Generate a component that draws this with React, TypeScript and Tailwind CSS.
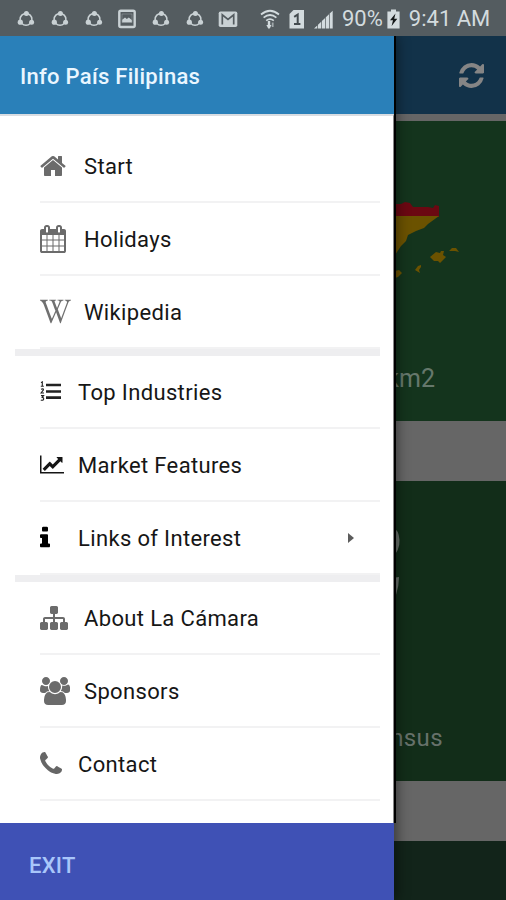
import type { ReactNode } from "react";
import { FaWikipediaW } from "react-icons/fa";

type GlyphProps = {
  box: string;
  d: string;
  className: string;
};

function Glyph({ box, d, className }: GlyphProps) {
  return (
    <svg viewBox={box} preserveAspectRatio="none" fill="currentColor" className={className}>
      <path d={d} />
    </svg>
  );
}

const paths = {
  home: "M1472 992v480q0 26-19 45t-45 19h-384v-384h-256v384h-384q-26 0-45-19t-19-45v-480q0-1 .5-3t.5-3l575-474 575 474q1 2 1 6zm223-69l-62 74q-8 9-21 11h-3q-13 0-21-7l-692-577-692 577q-12 8-24 7-13-2-21-11l-62-74q-8-10-7-23.5t11-21.5l719-599q32-26 76-26t76 26l244 204v-195q0-14 9-23t23-9h192q14 0 23 9t9 23v408l219 182q10 8 11 21.5t-7 23.5z",
  calendar:
    "M192 1664h288v-288h-288v288zm352 0h320v-288h-320v288zm-352-352h288v-320h-288v320zm352 0h320v-320h-320v320zm-352-384h288v-288h-288v288zm736 736h320v-288h-320v288zm-384-736h320v-288h-320v288zm768 736h288v-288h-288v288zm-384-352h320v-320h-320v320zm-352-864v-288q0-13-9.5-22.5t-22.5-9.5h-64q-13 0-22.5 9.5t-9.5 22.5v288q0 13 9.5 22.5t22.5 9.5h64q13 0 22.5-9.5t9.5-22.5zm736 864h288v-320h-288v320zm-384-384h320v-288h-320v288zm384 0h288v-288h-288v288zm32-480v-288q0-13-9.5-22.5t-22.5-9.5h-64q-13 0-22.5 9.5t-9.5 22.5v288q0 13 9.5 22.5t22.5 9.5h64q13 0 22.5-9.5t9.5-22.5zm384-64v1280q0 52-38 90t-90 38h-1408q-52 0-90-38t-38-90v-1280q0-52 38-90t90-38h128v-96q0-66 47-113t113-47h64q66 0 113 47t47 113v96h384v-96q0-66 47-113t113-47h64q66 0 113 47t47 113v96h128q52 0 90 38t38 90z",
  refresh:
    "M1639 1056q0 5-1 7-64 268-268 434.5t-478 166.5q-146 0-282.5-55t-243.5-157l-129 129q-19 19-45 19t-45-19-19-45v-448q0-26 19-45t45-19h448q26 0 45 19t19 45-19 45l-137 137q71 66 161 102t187 36q134 0 250-65t186-179q11-17 53-117 8-23 30-23h192q13 0 22.5 9.5t9.5 22.5zm25-800v448q0 26-19 45t-45 19h-448q-26 0-45-19t-19-45 19-45l138-138q-148-137-349-137-134 0-250 65t-186 179q-11 17-53 117-8 23-30 23h-199q-13 0-22.5-9.5t-9.5-22.5v-7q65-268 270-434.5t480-166.5q146 0 284 55.5t245 156.5l130-129q19-19 45-19t45 19 19 45z",
  chart:
    "M2048 1536v128h-2048v-1536h128v1408h1920zm-128-1248v435q0 21-19.5 29.5t-35.5-7.5l-121-121-633 633q-10 10-23 10t-23-10l-233-233-416 416-192-192 585-585q10-10 23-10t23 10l233 233 464-464-121-121q-16-16-7.5-35.5t29.5-19.5h435q14 0 23 9t9 23z",
  info: "M1216 1344v128q0 26-19 45t-45 19h-512q-26 0-45-19t-19-45v-128q0-26 19-45t45-19h64v-384h-64q-26 0-45-19t-19-45v-128q0-26 19-45t45-19h384q26 0 45 19t19 45v576h64q26 0 45 19t19 45zm-128-1152v192q0 26-19 45t-45 19h-256q-26 0-45-19t-19-45v-192q0-26 19-45t45-19h256q26 0 45 19t19 45z",
  sitemap:
    "M1792 1248v320q0 40-28 68t-68 28h-320q-40 0-68-28t-28-68v-320q0-40 28-68t68-28h96v-192h-512v192h96q40 0 68 28t28 68v320q0 40-28 68t-68 28h-320q-40 0-68-28t-28-68v-320q0-40 28-68t68-28h96v-192h-512v192h96q40 0 68 28t28 68v320q0 40-28 68t-68 28h-320q-40 0-68-28t-28-68v-320q0-40 28-68t68-28h96v-192q0-52 38-90t90-38h512v-192h-96q-40 0-68-28t-28-68v-320q0-40 28-68t68-28h320q40 0 68 28t28 68v320q0 40-28 68t-68 28h-96v192h512q52 0 90 38t38 90v192h96q40 0 68 28t28 68z",
  phone:
    "M1600 1240q0 27-10 70.5t-21 68.5q-21 50-122 106-94 51-186 51-27 0-53-3.5t-57.5-12.5-47-14.5-55.500-20.5-49-18q-98-35-175-83-127-79-264-216t-216-264q-48-77-83-175-3-9-18-49t-20.5-55.5-14.5-47-12.5-57.5-3.5-53q0-92 51-186 56-101 106-122 25-11 68.5-21t70.5-10q14 0 21 3 18 6 53 76 11 19 30 54t35 63.5 31 53.5q3 4 17.5 25t21.5 35.5 7 28.5q0 20-28.5 50t-62 55-62 53-28.5 46q0 9 5 22.5t8.5 20.5 14 24 11.5 19q76 137 174 235t235 174q2 1 19 11.5t24 14 20.5 8.5 22.5 5q18 0 46-28.5t53-62 55-62 50-28.5q14 0 28.5 7t35.5 21.5 25 17.5q25 15 53.5 31t63.5 35 54 30q70 35 76 53 3 7 3 21z",
  group:
    "M657 896q-162 5-265 128h-134q-82 0-138-40.5t-56-118.5q0-353 124-353 6 0 43.5 21t97.5 42.5 119 21.5q67 0 133-23-5 37-5 66 0 159 93 293zm1071 637q0 120-73 189.5t-194 69.5h-874q-121 0-194-69.5t-73-189.5q0-53 3.5-103.5t14-109 26.5-108.5 43-97.5 62-81 85.5-53.5 111.5-20q10 0 43 21.5t73 48 107 48 135 21.5 135-21.5 107-48 73-48 43-21.5q61 0 111.5 20t85.5 53.5 62 81 43 97.5 26.5 108.5 14 109 3.5 103.5zm-1024-1277q0 106-75 181t-181 75-181-75-75-181 75-181 181-75 181 75 75 181zm704 384q0 159-112.5 271.5t-271.5 112.5-271.5-112.5-112.5-271.5 112.5-271.5 271.5-112.5 271.5 112.5 112.5 271.5zm576 225q0 78-56 118.5t-138 40.5h-134q-103-123-265-128 93-134 93-293 0-29-5-66 66 23 133 23 59 0 119-21.5t97.5-42.5 43.5-21q124 0 124 353zm-128-609q0 106-75 181t-181 75-181-75-75-181 75-181 181-75 181 75 75 181z",
};

function ShareIcon() {
  return (
    <svg viewBox="0 0 18 18" className="h-[18px] w-[18px]" fill="none" stroke="currentColor">
      <circle cx="9" cy="9.3" r="5.9" strokeWidth="1.5" />
      <g fill="currentColor" stroke="none">
        <circle cx="9.4" cy="3.4" r="2.5" />
        <circle cx="3.3" cy="12.2" r="2.6" />
        <circle cx="14.6" cy="12.2" r="2.5" />
      </g>
    </svg>
  );
}

function PictureIcon() {
  return (
    <svg viewBox="0 0 18 20" className="h-5 w-[18px]">
      <rect x="1.3" y="1.7" width="15.4" height="16.3" rx="1.5" fill="none" stroke="currentColor" strokeWidth="2.4" />
      <path d="M4 5h10v8.500H4z" fill="none" stroke="currentColor" strokeWidth="1" opacity=".3" />
      <path d="M4.2 13.3v-2.500L7 8.600l1.800 1.500 2-1.600 3 2.600v2.200z" fill="currentColor" />
    </svg>
  );
}

function MailIcon() {
  return (
    <svg viewBox="0 0 20 18" className="h-[18px] w-5">
      <rect x=".7" y="1.5" width="18.6" height="15.5" rx="1.8" fill="currentColor" />
      <path d="M4.3 14.500V4.800L10 9.500l5.700-4.700v9.700" fill="none" stroke="#545c60" strokeWidth="1.7" />
    </svg>
  );
}

function WifiIcon() {
  return (
    <svg viewBox="0 0 20 21" className="h-[21px] w-5" fill="none" stroke="currentColor" strokeWidth="1.7">
      <path d="M1 5.5Q10-2 19 5.5M3.6 8.6q6.4-5.2 12.800 0M6.2 11.600q3.800-3 7.600 0" />
      <path d="M9 12v7" strokeWidth="2.4" />
      <path d="M12.700 13.500v4.500" strokeWidth="1.8" opacity=".6" />
      <path d="M6.300 16 9 20.300l2.500-4.300z" fill="currentColor" stroke="none" />
    </svg>
  );
}

function SimIcon() {
  return (
    <svg viewBox="0 0 16 19" className="h-[19px] w-4">
      <path d="M4.5 0H15v18.5H.5V4z" fill="currentColor" />
      <path d="M5.2 6.8 8.700 4.5v9.500M5 14h6.400" fill="none" stroke="#444c50" strokeWidth="2" />
    </svg>
  );
}

function SignalIcon() {
  return (
    <svg viewBox="0 0 19 19" className="h-[19px] w-[19px]" fill="currentColor">
      <path d="M0 18.5 3.300 15.500v3zM4 14.800l3.200-3v6.700H4zM7.900 11.100l3.200-3v10.400H7.900zM11.800 7.300l3.200-3v14.200h-3.200zM15.700 3.600l3-2.800v17.700h-3z" />
    </svg>
  );
}

function BatteryIcon() {
  return (
    <svg viewBox="0 0 13 20" className="h-5 w-[13px]">
      <path d="M4 .5h5v2h3.600V19.500H.4V2.500H4z" fill="currentColor" />
      <path d="M8.500 4.500 3 11.300h3L4.600 17l5.700-7.300H7.200z" fill="#141819" />
    </svg>
  );
}

function StatusBar() {
  return (
    <div className="relative z-10 flex h-9 shrink-0 items-center bg-[#545c60] pt-[2px] text-[#d3dbde]">
      <div className="flex w-[204px] shrink-0 items-center justify-between pl-[17px] text-[#c9d1d4]">
        <ShareIcon />
        <ShareIcon />
        <ShareIcon />
        <PictureIcon />
        <ShareIcon />
        <ShareIcon />
      </div>
      <div className="ml-[14px] text-[#c9d1d4]">
        <MailIcon />
      </div>
      <div className="ml-[22px] flex items-center gap-[9px]">
        <WifiIcon />
        <SimIcon />
        <SignalIcon />
      </div>
      <span className="ml-[9px] text-[22px] leading-none">90%</span>
      <div className="ml-1">
        <BatteryIcon />
      </div>
      <span className="ml-[9px] whitespace-nowrap text-[22px] leading-none">9:41 AM</span>
    </div>
  );
}

type Item = {
  label: string;
  icon: ReactNode;
  gap: string;
  arrow?: boolean;
};

const sections: Item[][] = [
  [
    {
      label: "Start",
      gap: "w-11",
      icon: <Glyph box="64 0 1664 1792" d={paths.home} className="h-7 w-[26px] text-[#6b6b6b]" />,
    },
    {
      label: "Holidays",
      gap: "w-11",
      icon: <Glyph box="64 0 1664 1792" d={paths.calendar} className="h-7 w-[26px] text-[#6b6b6b]" />,
    },
    {
      label: "Wikipedia",
      gap: "w-11",
      icon: <FaWikipediaW className="h-[29px] w-[31px] text-[#707070]" preserveAspectRatio="none" />,
    },
  ],
  [
    {
      label: "Top Industries",
      gap: "w-[38px]",
      icon: (
        <svg viewBox="0 0 21 21" className="h-[21px] w-[21px] text-[#222]" fill="none" stroke="currentColor">
          <path d="M6 4h15M6 10.500h15M6 16.700h15" strokeWidth="2.7" />
          <path
            d="M1 1.600 2.300.8V5M.8 5.300h3M1 8.200q2.700-1 2.400.7L1 12h3M1 14.600h2.600L2.200 16.400q2 .2 1.300 2.200-1 1.200-2.700.3"
            strokeWidth="1.1"
          />
        </svg>
      ),
    },
    {
      label: "Market Features",
      gap: "w-[38px]",
      icon: <Glyph box="0 0 2048 1792" d={paths.chart} className="h-[21px] w-6 text-[#151515]" />,
    },
    {
      label: "Links of Interest",
      gap: "w-[38px]",
      arrow: true,
      icon: <Glyph box="576 0 640 1792" d={paths.info} className="h-[26px] w-2.5 text-black" />,
    },
  ],
  [
    {
      label: "About La Cámara",
      gap: "w-11",
      icon: <Glyph box="0 0 1792 1792" d={paths.sitemap} className="h-7 w-7 text-[#6b6b6b]" />,
    },
    {
      label: "Sponsors",
      gap: "w-11",
      icon: <Glyph box="64 0 1920 1792" d={paths.group} className="h-7 w-[30px] text-[#6b6b6b]" />,
    },
    {
      label: "Contact",
      gap: "w-[38px]",
      icon: <Glyph box="192 0 1408 1792" d={paths.phone} className="h-7 w-[22px] text-[#666]" />,
    },
  ],
];

function MenuRow({ item }: { item: Item }) {
  return (
    <li className="ml-[25px] flex h-[73px] items-center border-b-2 border-[#f2f2f3]">
      <span className={`flex shrink-0 items-center ${item.gap}`}>{item.icon}</span>
      <span className="whitespace-nowrap pt-[2px] text-[22px] leading-7 tracking-[0.35px] text-[#161616]">
        {item.label}
      </span>
      {item.arrow && (
        <svg viewBox="0 0 6 10" className="ml-auto mr-[26px] h-2.5 w-1.5" fill="#5c5c5c">
          <path d="M0 0 6 5 0 10z" />
        </svg>
      )}
    </li>
  );
}

function Drawer() {
  return (
    <aside className="absolute inset-y-0 left-0 flex w-[394px] flex-col bg-white shadow-[3px_0_12px_rgba(0,0,0,0.45)]">
      <header className="flex h-[78px] shrink-0 items-center bg-[#2a80b9] pl-5 pt-[2px]">
        <h1 className="whitespace-nowrap text-[22px] font-medium tracking-[0.28px] text-[#eaf6ff]">
          Info País Filipinas
        </h1>
      </header>
      <nav className="h-[709px] border-r border-t-2 border-t-[#d9dde2] border-r-[#888] pl-[15px] pr-[13px] pt-[14px]">
        {sections.map((items, i) => (
          <div key={i}>
            {i > 0 && <div className="h-[7px] bg-[#eeeef0]" />}
            <ul>
              {items.map((item) => (
                <MenuRow key={item.label} item={item} />
              ))}
            </ul>
          </div>
        ))}
      </nav>
      <button
        type="button"
        className="flex w-full flex-1 items-center bg-[#3f51b5] pl-[29px] pt-2 text-[22px] font-medium tracking-[0.25px] text-[#a9c6fa]"
      >
        EXIT
      </button>
      <span className="absolute left-[394px] top-0 h-[787px] w-[2px] bg-black" />
    </aside>
  );
}

function Background() {
  return (
    <main className="flex h-full flex-col bg-[#666]">
      <div className="flex h-[78px] shrink-0 items-center justify-end bg-[#123249] pr-[22px]">
        <Glyph box="128 128 1536 1536" d={paths.refresh} className="h-[25px] w-[25px] text-[#858585]" />
      </div>
      <section className="relative mt-[7px] flex h-[300px] shrink-0 items-end justify-end bg-[#14341d] pb-[26px] pr-[71px]">
        {/* eastern coast of the map and the islands */}
        <svg viewBox="0 0 70 80" className="absolute left-[392px] top-[80px] h-20 w-[70px]">
          <path d="M0 3h9l4-2 5 1 3 4h15l5 1 2-3 4 1v11H0z" fill="#6b0812" />
          <path d="M0 15h47l-11 8-4 4-8 3-8 4-2 6-5 5-6 9H0z" fill="#6b5200" />
          <path
            d="m38 56 6-5 4 1 1-2h3l-1 4 3 2-6 6-2-2h-4zM57 50l3-3h4l3 4-4-1zM23 69l3-4 3-1v2l-2 3 1 3zM3 70l4-1 3 3-4 4-3 1z"
            fill="#6b5200"
          />
        </svg>
        <span className="whitespace-nowrap text-[25px] leading-8 text-[#66786c]">505.990 km2</span>
      </section>
      <section className="relative mt-[60px] flex h-[300px] shrink-0 items-end justify-end bg-[#122d19] pb-[27px] pr-[63px]">
        <svg viewBox="0 0 10 80" className="absolute left-[392px] top-[45px] h-20 w-2.5" fill="#69716b">
          <path d="M0 0q7 4 7.500 14T0 32zM0 52l7-1q0 9-3 18l-4 3z" />
        </svg>
        <span className="whitespace-nowrap text-[24px] leading-8 tracking-[0.4px] text-[#66716a]">Census</span>
      </section>
      <section className="mt-[60px] flex-1 bg-[#12241a]" />
    </main>
  );
}

export default function App() {
  return (
    <div className="flex h-[900px] w-[506px] flex-col overflow-hidden font-['Roboto',sans-serif]">
      <StatusBar />
      <div className="relative h-[864px]">
        <Background />
        <Drawer />
      </div>
    </div>
  );
}
